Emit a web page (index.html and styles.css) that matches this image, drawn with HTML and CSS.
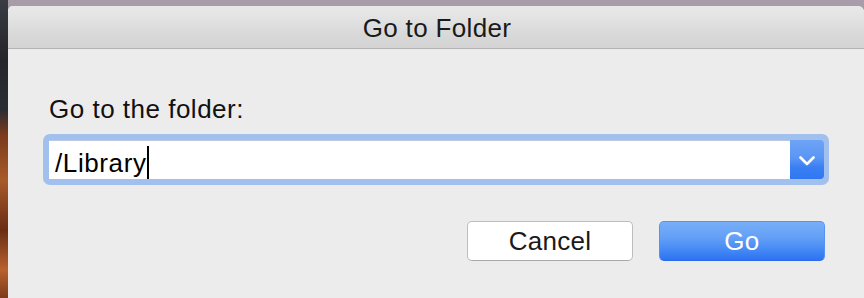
FILE: index.html
```html
<!DOCTYPE html>
<html>
<head>
<meta charset="utf-8">
<link rel="stylesheet" href="styles.css">
</head>
<body>
<div class="desktop">
  <div class="strip"></div>
  <div class="main">
    <div class="topband"></div>
    <div class="window">
      <div class="titlebar">Go to Folder</div>
      <div class="content">
        <div class="label">Go to the folder:</div>
        <div class="field">
          <div class="input"><span class="value">/Library</span><span class="caret"></span></div>
          <div class="drop">
            <svg width="16" height="10" viewBox="0 0 16 10"><path d="M1.5 1.5 L8 8 L14.5 1.5" fill="none" stroke="#fff" stroke-width="2.6" stroke-linecap="round" stroke-linejoin="round"/></svg>
          </div>
        </div>
        <div class="buttons">
          <div class="btn cancel">Cancel</div>
          <div class="btn go">Go</div>
        </div>
      </div>
    </div>
  </div>
</div>
</body>
</html>
```

FILE: styles.css
```css
html, body {
  margin: 0;
  padding: 0;
}
body {
  width: 864px;
  height: 298px;
  overflow: hidden;
  font-family: "Liberation Sans", Arial, sans-serif;
}
.desktop {
  display: flex;
  height: 298px;
}
.strip {
  width: 8px;
  flex: none;
  background: linear-gradient(to bottom, #3a3c44 0, #24262c 60px, #2b2d35 110px, #7a3a1c 135px, #a85a2a 180px, #6a2c14 230px, #b8622e 270px, #7c3a1a 298px);
}
.main {
  flex: 1;
  min-width: 0;
  display: flex;
  flex-direction: column;
  background: #a59ca6;
}
.topband {
  height: 6px;
  flex: none;
  background: #a89ca8;
}
.window {
  flex: 1;
  min-width: 0;
  background: #ececec;
  border-radius: 5px 6px 0 0;
  overflow: hidden;
  display: flex;
  flex-direction: column;
}
.titlebar {
  height: 42px;
  flex: none;
  border-bottom: 1px solid #b3b3b3;
  background: linear-gradient(to bottom, #e8e8e8 0, #e4e4e4 10px, #d9d9d9 28px, #d3d3d3 100%);
  text-align: center;
  font-size: 26px;
  line-height: 44px;
  letter-spacing: 0.35px;
  color: #1a1a1a;
  padding-left: 2px;
}
.content {
  padding: 45px 39px 0 35px;
}
.label {
  font-size: 26px;
  line-height: 30px;
  color: #111;
  padding-left: 6px;
  letter-spacing: 0.5px;
}
.field {
  margin-top: 10px;
  width: 786px;
  box-sizing: border-box;
  height: 51px;
  padding: 6px 5px 6px 6px;
  background: #a1c0ee;
  border-radius: 7px;
  display: flex;
}
.input {
  flex: 1;
  background: #fff;
  border-top: 1px solid #b9c9e4;
  box-sizing: border-box;
  display: flex;
  align-items: center;
  padding-left: 6px;
}
.value {
  font-size: 26px;
  line-height: 30px;
  letter-spacing: 0.6px;
  color: #000;
  padding-top: 5px;
}
.caret {
  width: 2px;
  height: 33px;
  background: #000;
  margin-left: 0px;
  margin-top: 4px;
}
.drop {
  width: 34px;
  flex: none;
  border-radius: 0 4px 4px 0;
  background: linear-gradient(to bottom, #6ea4f7 0, #5b96f5 45%, #3a80f3 70%, #2f76f2 100%);
  display: flex;
  align-items: center;
  justify-content: center;
}
.drop svg {
  margin-top: 2px;
}
.buttons {
  margin-top: 36px;
  display: flex;
  justify-content: flex-end;
  gap: 26px;
}
.btn {
  width: 166px;
  height: 40px;
  box-sizing: border-box;
  border-radius: 5px;
  text-align: center;
  font-size: 26px;
  line-height: 38px;
  letter-spacing: 0.3px;
}
.cancel {
  background: #fff;
  border: 1px solid #bdbdbd;
  border-bottom-color: #a8a8a8;
  color: #1a1a1a;
}
.go {
  background: linear-gradient(to bottom, #78aef8 0, #64a0f6 40%, #4388f4 75%, #2d72f2 100%);
  border: 1px solid #5592f4;
  border-bottom-color: #2c6ce8;
  color: #fff;
}
```
